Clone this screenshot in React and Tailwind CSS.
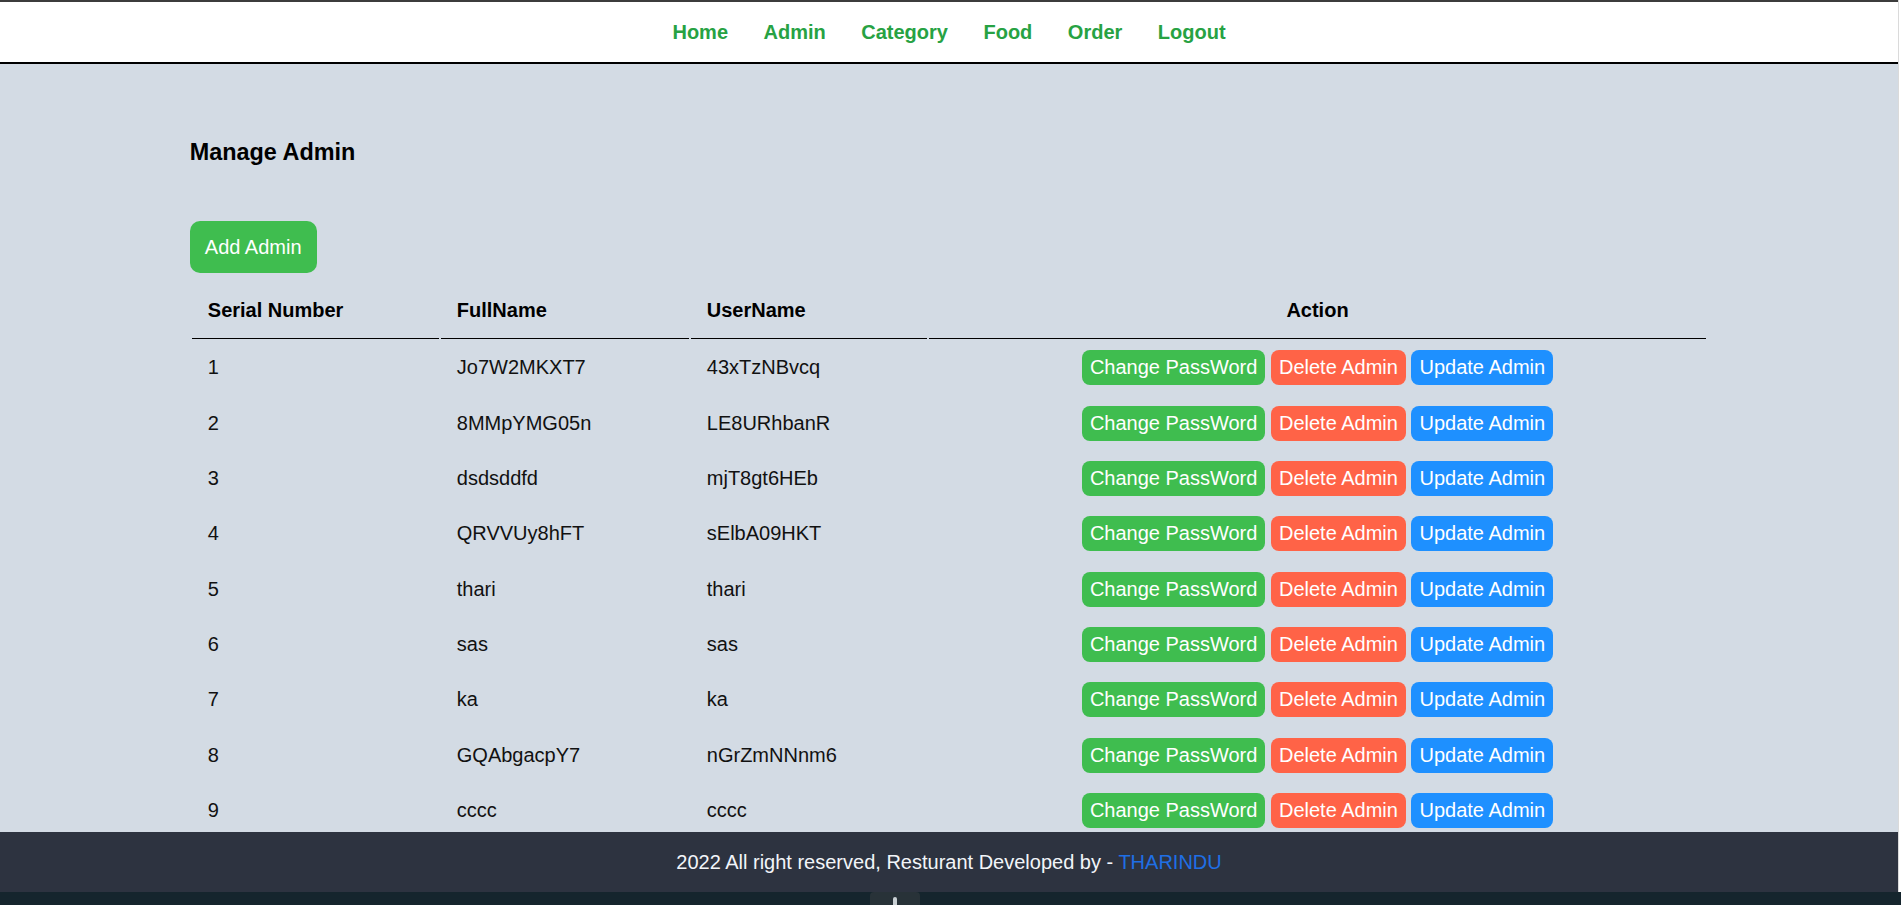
import React from "react";

const admins = [
  { id: 1, fullName: "Jo7W2MKXT7", userName: "43xTzNBvcq" },
  { id: 2, fullName: "8MMpYMG05n", userName: "LE8URhbanR" },
  { id: 3, fullName: "dsdsddfd", userName: "mjT8gt6HEb" },
  { id: 4, fullName: "QRVVUy8hFT", userName: "sElbA09HKT" },
  { id: 5, fullName: "thari", userName: "thari" },
  { id: 6, fullName: "sas", userName: "sas" },
  { id: 7, fullName: "ka", userName: "ka" },
  { id: 8, fullName: "GQAbgacpY7", userName: "nGrZmNNnm6" },
  { id: 9, fullName: "cccc", userName: "cccc" },
];

const links = ["Home", "Admin", "Category", "Food", "Order", "Logout"];

function Menu() {
  return (
    <nav className="h-[64px] shrink-0 bg-white border-t-2 border-t-[#3c3c3c] border-b-2 border-b-black flex items-center justify-center gap-[35.5px]">
      {links.map((l) => (
        <a key={l} href="#" className="text-[20px] leading-[23px] font-bold text-[#27a243]">
          {l}
        </a>
      ))}
    </nav>
  );
}

function AdminTable() {
  return (
    <table className="w-full mt-[8px] border-separate border-spacing-[2px] text-[20px] leading-[23px]">
      <thead>
        <tr>
          <th className="w-[247px] text-left font-bold px-4 pt-[16px] pb-[16px] border-b border-black">Serial Number</th>
          <th className="w-[248px] text-left font-bold px-4 pt-[16px] pb-[16px] border-b border-black">FullName</th>
          <th className="w-[236px] text-left font-bold px-4 pt-[16px] pb-[16px] border-b border-black">UserName</th>
          <th className="text-center font-bold px-4 pt-[16px] pb-[16px] border-b border-black">Action</th>
        </tr>
      </thead>
      <tbody>
        {admins.map((a) => (
          <tr key={a.id} className="text-[#111]">
            <td className="px-4 py-[9.2px]">{a.id}</td>
            <td className="px-4 py-[9.2px]">{a.fullName}</td>
            <td className="px-4 py-[9.2px]">{a.userName}</td>
            <td className="px-4 py-[9.2px] text-center">
              <button className="bg-[#3fbd4f] text-white px-2 py-[6px] rounded-[8px]">Change PassWord</button>{" "}
              <button className="bg-[#ff6347] text-white px-2 py-[6px] rounded-[8px]">Delete Admin</button>{" "}
              <button className="bg-[#1e90ff] text-white px-2 py-[6px] rounded-[8px]">Update Admin</button>
            </td>
          </tr>
        ))}
      </tbody>
    </table>
  );
}

export default function App() {
  return (
    <div className="h-screen flex flex-col overflow-hidden font-['Liberation_Sans',Arial,sans-serif] text-black">
      <div className="flex-1 flex min-h-0">
        <div className="flex-1 flex flex-col min-w-0">
          <Menu />
          <main className="flex-1 overflow-hidden bg-[#d3dbe4]">
            <div className="w-[80%] mx-auto pt-[75px]">
              <h3 className="text-[23.4px] leading-[27px] font-bold">Manage Admin</h3>
              <button className="mt-[55px] bg-[#3fbd4f] text-white text-[20px] leading-[23px] px-[15px] py-[14.5px] rounded-[10px]">
                Add Admin
              </button>
              <AdminTable />
            </div>
          </main>
          <footer className="h-[60px] shrink-0 bg-[#2d3340] flex items-center justify-center text-[20px] text-[#f2f5f9]">
            <p>
              2022 All right reserved, Resturant Developed by -{" "}
              <a href="#" className="text-[#1f6fe5]">THARINDU</a>
            </p>
          </footer>
        </div>
        <div className="w-[3px] shrink-0 bg-white border-l border-[#dadada]"></div>
      </div>
      <div className="h-[13px] shrink-0 bg-[#15252d] flex">
        <div className="ml-[870px] w-[50px] h-[13px] bg-[#283238] rounded-t-[4px] flex justify-center">
          <div className="mt-[5px] w-[4px] h-[8px] bg-[#c9d0d4] rounded-t-[2px]"></div>
        </div>
      </div>
    </div>
  );
}
